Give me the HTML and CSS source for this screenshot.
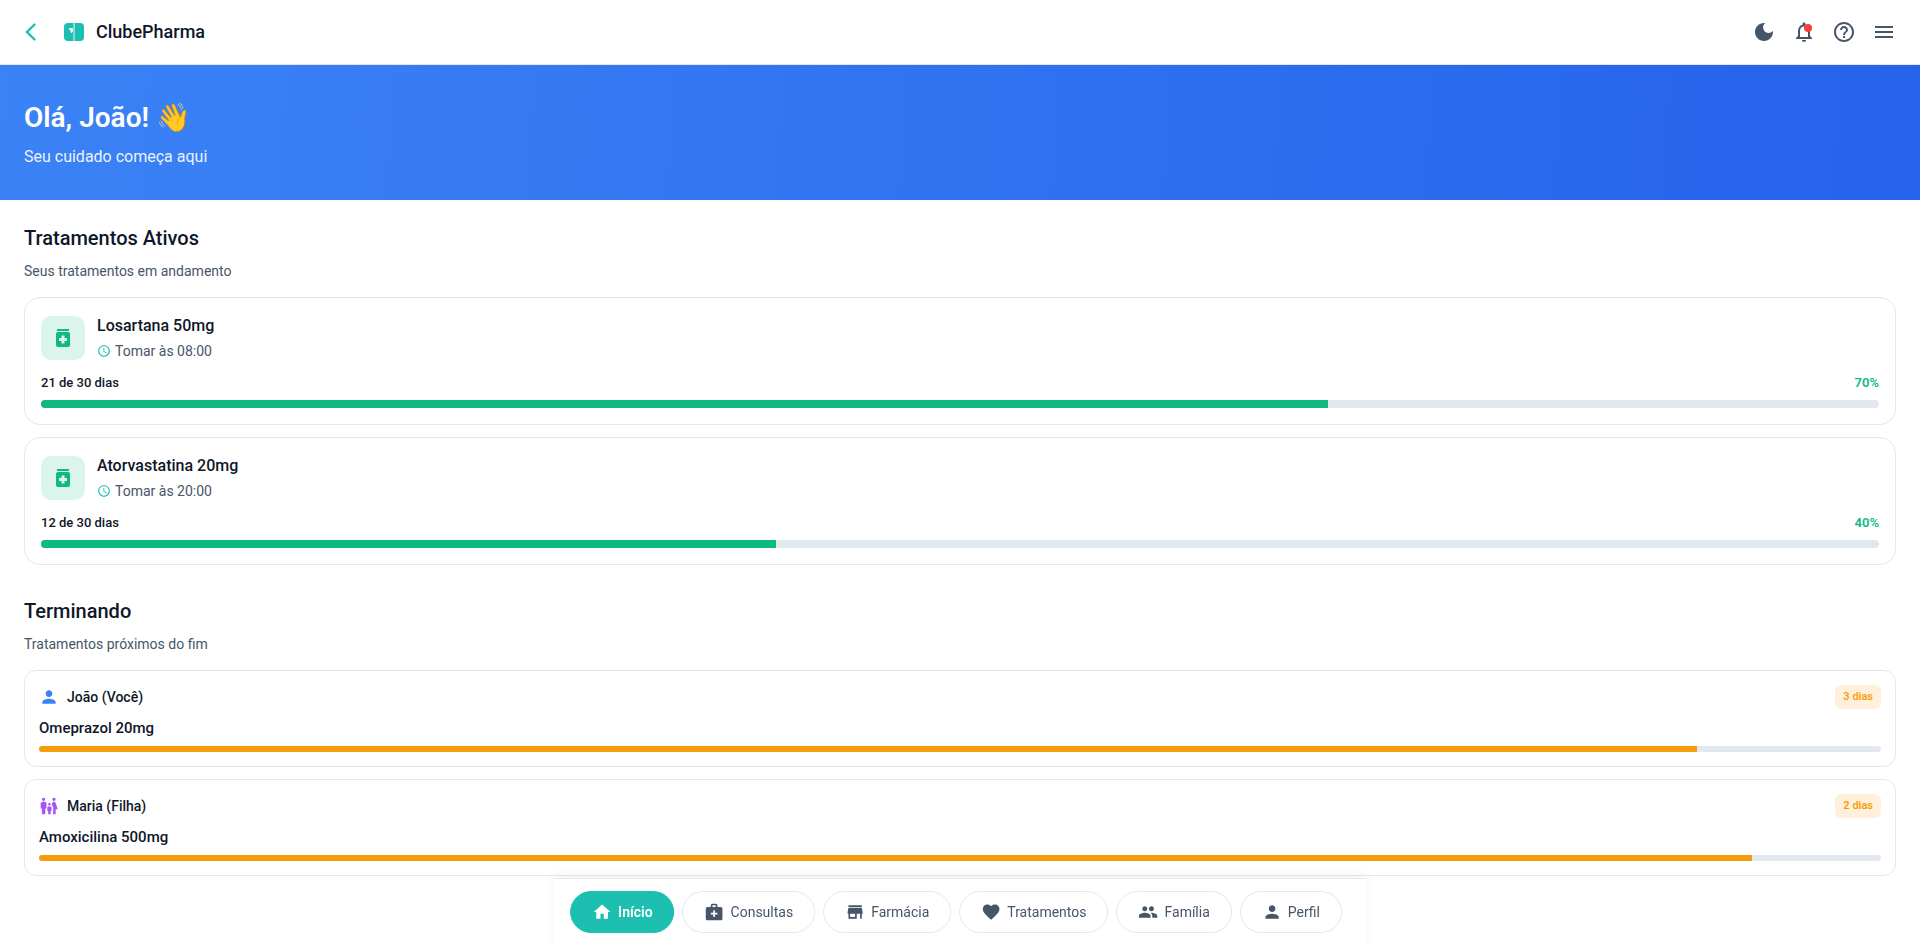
FILE: index.html
```html
<!DOCTYPE html>
<html lang="pt-BR">
<head>
<meta charset="utf-8">
<meta name="viewport" content="width=device-width, initial-scale=1">
<title>ClubePharma</title>
<link rel="stylesheet" href="styles.css">
</head>
<body>
<svg class="sprite" aria-hidden="true">
  <symbol id="person" viewBox="0 0 24 24"><path d="M12 12c2.21 0 4-1.79 4-4s-1.79-4-4-4-4 1.79-4 4 1.79 4 4 4zm0 2c-2.67 0-8 1.34-8 4v2h16v-2c0-2.66-5.33-4-8-4z"/></symbol>
  <symbol id="medication" viewBox="0 0 24 24"><path d="M6 3h12v2H6zM17 6H7c-1.1 0-2 .9-2 2v11c0 1.1.9 2 2 2h10c1.1 0 2-.9 2-2V8c0-1.1-.9-2-2-2zm-1 9h-2.5v2.5h-3V15H8v-3h2.5V9.5h3V12H16v3z"/></symbol>
  <symbol id="clock" viewBox="0 0 24 24"><path d="M11.99 2C6.47 2 2 6.48 2 12s4.47 10 9.99 10C17.52 22 22 17.52 22 12S17.52 2 11.99 2zM12 20c-4.42 0-8-3.58-8-8s3.58-8 8-8 8 3.58 8 8-3.58 8-8 8zm.5-13H11v6l5.25 3.15.75-1.23-4.5-2.67z"/></symbol>
</svg>

<header class="topbar">
  <button class="icon-button back" aria-label="Voltar">
    <svg class="icon" viewBox="0 0 24 24"><path d="M14.5 4.5 7 12l7.5 7.500" fill="none" stroke="currentColor" stroke-width="2.400" stroke-linecap="round"/></svg>
  </button>
  <div class="brand">
    <svg class="logo" viewBox="0 0 20 20" aria-hidden="true">
      <rect y="1" width="20" height="18" rx="4"/>
      <path class="logo-split" d="M9.300 1h1.500v18H9.300z"/>
      <path class="logo-mark" d="M5.300 6h3.500v3.200l-.8 1.500H6.700V8.200H5.300z"/>
    </svg>
    <span class="brand-name">ClubePharma</span>
  </div>
  <div class="actions">
    <button class="icon-button" aria-label="Modo escuro"><svg class="icon" viewBox="0 0 24 24"><path d="M12 3c-4.970 0-9 4.030-9 9s4.030 9 9 9 9-4.030 9-9c0-.46-.04-.92-.1-1.360-.98 1.370-2.580 2.260-4.400 2.260-2.980 0-5.400-2.420-5.400-5.400 0-1.810.89-3.420 2.260-4.400-.44-.06-.9-.1-1.360-.1z"/></svg></button>
    <button class="icon-button" aria-label="Notificações"><svg class="icon" viewBox="0 0 24 24"><path d="M12 22c1.100 0 2-.9 2-2h-4c0 1.100.89 2 2 2zm6-6v-5c0-3.070-1.640-5.640-4.500-6.320V4c0-.83-.67-1.500-1.500-1.500s-1.500.67-1.500 1.500v.68C7.630 5.360 6 7.920 6 11v5l-2 2v1h16v-1l-2-2zm-2 1H8v-6c0-2.480 1.510-4.500 4-4.500s4 2.020 4 4.500v6z"/></svg><span class="dot"></span></button>
    <button class="icon-button" aria-label="Ajuda"><svg class="icon" viewBox="0 0 24 24"><path d="M11 18h2v-2h-2v2zm1-16C6.480 2 2 6.480 2 12s4.480 10 10 10 10-4.480 10-10S17.520 2 12 2zm0 18c-4.410 0-8-3.590-8-8s3.590-8 8-8 8 3.590 8 8-3.590 8-8 8zm0-14c-2.210 0-4 1.790-4 4h2c0-1.100.9-2 2-2s2 .9 2 2c0 2-3 1.750-3 5h2c0-2.250 3-2.500 3-5 0-2.210-1.790-4-4-4z"/></svg></button>
    <button class="icon-button" aria-label="Menu"><svg class="icon" viewBox="0 0 24 24"><path d="M3 18h18v-2H3v2zm0-5h18v-2H3v2zm0-7v2h18V6H3z"/></svg></button>
  </div>
</header>

<section class="hero">
  <h1 class="hero-title">Olá, João! 👋</h1>
  <p class="hero-text">Seu cuidado começa aqui</p>
</section>

<main class="content">
  <section class="section">
    <h2 class="section-title">Tratamentos Ativos</h2>
    <p class="section-text">Seus tratamentos em andamento</p>
    <div class="cards">
      <article class="card">
        <div class="treatment">
          <span class="treatment-icon"><svg class="icon"><use href="#medication"/></svg></span>
          <div class="treatment-info">
            <h3 class="treatment-name">Losartana 50mg</h3>
            <p class="treatment-time"><svg class="icon-small"><use href="#clock"/></svg>Tomar às 08:00</p>
          </div>
        </div>
        <div class="progress-label"><span>21 de 30 dias</span><span class="percent">70%</span></div>
        <div class="bar"><div class="fill" style="width:70%"></div></div>
      </article>
      <article class="card">
        <div class="treatment">
          <span class="treatment-icon"><svg class="icon"><use href="#medication"/></svg></span>
          <div class="treatment-info">
            <h3 class="treatment-name">Atorvastatina 20mg</h3>
            <p class="treatment-time"><svg class="icon-small"><use href="#clock"/></svg>Tomar às 20:00</p>
          </div>
        </div>
        <div class="progress-label"><span>12 de 30 dias</span><span class="percent">40%</span></div>
        <div class="bar"><div class="fill" style="width:40%"></div></div>
      </article>
    </div>
  </section>

  <section class="section">
    <h2 class="section-title">Terminando</h2>
    <p class="section-text">Tratamentos próximos do fim</p>
    <div class="cards">
      <article class="card card-ending">
        <div class="person-row">
          <svg class="icon-medium self"><use href="#person"/></svg>
          <span class="person-name">João (Você)</span>
          <span class="badge">3 dias</span>
        </div>
        <h3 class="medicine">Omeprazol 20mg</h3>
        <div class="bar bar-thin"><div class="fill fill-warning" style="width:90%"></div></div>
      </article>
      <article class="card card-ending">
        <div class="person-row">
          <svg class="icon-medium daughter" viewBox="0 0 24 24"><path d="M16 4c0-1.110.89-2 2-2s2 .89 2 2-.89 2-2 2-2-.89-2-2zm4 18v-6h2.500l-2.540-7.630A2.010 2.010 0 0 0 18.060 7h-.12a2 2 0 0 0-1.900 1.370l-.86 2.580c1.080.6 1.820 1.730 1.820 3.050v8h3zm-7.500-10.500c.83 0 1.500-.67 1.500-1.500s-.67-1.500-1.500-1.500S11 9.170 11 10s.67 1.500 1.500 1.500zM5.500 6c1.110 0 2-.89 2-2s-.89-2-2-2-2 .89-2 2 .89 2 2 2zm2 16v-7H9V9c0-1.100-.9-2-2-2H4c-1.100 0-2 .9-2 2v6h1.500v7h4zm6.500 0v-4h1v-4c0-.82-.68-1.500-1.500-1.500h-2c-.82 0-1.500.68-1.500 1.500v4h1v4h3z"/></svg>
          <span class="person-name">Maria (Filha)</span>
          <span class="badge">2 dias</span>
        </div>
        <h3 class="medicine">Amoxicilina 500mg</h3>
        <div class="bar bar-thin"><div class="fill fill-warning" style="width:93%"></div></div>
      </article>
    </div>
  </section>
</main>

<nav class="bottom-nav" aria-label="Principal">
  <button class="tab tab-active" aria-current="page"><svg class="icon-medium" viewBox="0 0 24 24"><path d="M10 20v-6h4v6h5v-8h3L12 3 2 12h3v8z"/></svg>Início</button>
  <button class="tab"><svg class="icon-medium" viewBox="0 0 24 24"><path d="M20 6h-4V4c0-1.100-.9-2-2-2h-4c-1.100 0-2 .9-2 2v2H4c-1.100 0-2 .9-2 2v12c0 1.100.9 2 2 2h16c1.100 0 2-.9 2-2V8c0-1.100-.9-2-2-2zM10 4h4v2h-4V4zm6 11h-3v3h-2v-3H8v-2h3v-3h2v3h3v2z"/></svg>Consultas</button>
  <button class="tab"><svg class="icon-medium" viewBox="0 0 24 24"><path d="M20 4H4v2h16V4zm1 10v-2l-1-5H4l-1 5v2h1v6h10v-6h4v6h2v-6h1zm-9 4H6v-4h6v4z"/></svg>Farmácia</button>
  <button class="tab"><svg class="icon-medium" viewBox="0 0 24 24"><path d="M12 21.350l-1.450-1.320C5.400 15.360 2 12.280 2 8.500 2 5.420 4.420 3 7.500 3c1.740 0 3.410.81 4.500 2.090C13.090 3.810 14.760 3 16.500 3 19.580 3 22 5.420 22 8.500c0 3.780-3.400 6.860-8.550 11.540L12 21.350z"/></svg>Tratamentos</button>
  <button class="tab"><svg class="icon-medium" viewBox="0 0 24 24"><path d="M16 11c1.660 0 2.990-1.340 2.990-3S17.660 5 16 5c-1.660 0-3 1.340-3 3s1.340 3 3 3zm-8 0c1.660 0 2.990-1.340 2.990-3S9.660 5 8 5C6.340 5 5 6.340 5 8s1.340 3 3 3zm0 2c-2.330 0-7 1.170-7 3.500V19h14v-2.500c0-2.330-4.670-3.500-7-3.500zm8 0c-.29 0-.62.02-.97.05 1.160.84 1.970 1.970 1.970 3.450V19h6v-2.500c0-2.330-4.670-3.500-7-3.500z"/></svg>Família</button>
  <button class="tab"><svg class="icon-medium" viewBox="0 0 24 24"><use href="#person"/></svg>Perfil</button>
</nav>
</body>
</html>
```

FILE: styles.css
```css
* { box-sizing: border-box; margin: 0; }

body {
  font-family: Roboto, "Noto Sans", sans-serif;
  font-size: 14px;
  line-height: 20px;
  color: #0f172a;
  background: #fff;
  padding-bottom: 67px;
}

button { font: inherit; color: inherit; cursor: pointer; }

svg { display: block; flex: none; fill: currentColor; }

.sprite { position: absolute; width: 0; height: 0; }
.icon { width: 24px; height: 24px; }
.icon-medium { width: 20px; height: 20px; }
.icon-small { width: 14px; height: 14px; color: #1cbfb0; }

.topbar {
  display: flex;
  align-items: center;
  height: 65px;
  padding: 0 24px 0 20px;
  border-bottom: 1px solid #e2e8f0;
}

.icon-button {
  position: relative;
  padding: 0;
  border: 0;
  background: none;
  color: #475569;
}

.back { color: #1cbfb0; }

.brand {
  display: flex;
  align-items: center;
  gap: 12px;
  margin-left: 20px;
}

.logo { width: 20px; height: 20px; color: #1cbfb0; }
.logo-split { fill: #a4e5df; }
.logo-mark { fill: #fff; }
.brand-name { font-size: 18px; font-weight: 500; line-height: 24px; }

.actions { display: flex; gap: 16px; margin-left: auto; }

.dot {
  position: absolute;
  top: 4px;
  right: 4px;
  width: 8px;
  height: 8px;
  border-radius: 50%;
  background: #f44336;
}

.hero {
  padding: 32px 24px;
  color: #fff;
  background: linear-gradient(94deg, #3b82f6, #2563eb);
}

.hero-title { font-size: 28px; font-weight: 600; line-height: 42px; }
.hero-text { margin-top: 6px; font-size: 16px; line-height: 23px; opacity: 0.9; }

.content {
  display: flex;
  flex-direction: column;
  gap: 32px;
  padding: 24px 24px 0;
}

.section-title { font-size: 20px; font-weight: 500; line-height: 28px; }
.section-text { margin-top: 8px; line-height: 23px; color: #475569; }

.cards {
  display: flex;
  flex-direction: column;
  gap: 12px;
  margin-top: 14px;
}

.card { padding: 16px; border: 1px solid #e2e8f0; border-radius: 16px; }
.card-ending { padding: 14px; border-radius: 12px; }

.treatment { display: flex; align-items: center; gap: 12px; }

.treatment-icon {
  display: grid;
  place-items: center;
  width: 44px;
  height: 44px;
  border-radius: 10px;
  color: #10b981;
  background: #dbf4ec;
}

.treatment-name { font-size: 16px; font-weight: 500; line-height: 24px; }

.treatment-time {
  display: flex;
  align-items: center;
  gap: 4px;
  margin: 3px 0 1px;
  color: #475569;
}

.progress-label {
  display: flex;
  justify-content: space-between;
  margin: 12px 0 8px;
  font-size: 13px;
  font-weight: 500;
  line-height: 18px;
}

.percent { color: #10b981; font-weight: 600; }

.bar { height: 8px; border-radius: 4px; background: #e2e8f0; overflow: hidden; }
.bar-thin { height: 6px; border-radius: 3px; }
.fill { height: 100%; background: #10b981; }
.fill-warning { background: #f59e0b; }

.person-row { display: flex; align-items: center; gap: 8px; }
.person-name { font-weight: 500; }
.self { color: #3b82f6; }
.daughter { color: #a855f7; }

.badge {
  margin-left: auto;
  padding: 4px 8px;
  border-radius: 6px;
  font-size: 11px;
  font-weight: 600;
  line-height: 16px;
  color: #f59e0b;
  background: #fef0da;
}

.medicine { margin: 8px 0 6px; font-size: 15px; font-weight: 500; line-height: 23px; }

.bottom-nav {
  position: fixed;
  bottom: 0;
  left: 50%;
  transform: translateX(-50%);
  display: flex;
  gap: 8px;
  padding: 12px 24px 12px 16px;
  border-top: 1px solid #e2e8f0;
  background: #fff;
  box-shadow: 0 -2px 10px rgba(0, 0, 0, 0.06);
}

.tab {
  display: flex;
  align-items: center;
  gap: 6px;
  height: 42px;
  padding: 0 21px;
  border: 1px solid #e2e8f0;
  border-radius: 21px;
  color: #475569;
  background: #fff;
}

.tab-active { border-color: #1cbfb0; color: #fff; background: #1cbfb0; font-weight: 600; }
```
